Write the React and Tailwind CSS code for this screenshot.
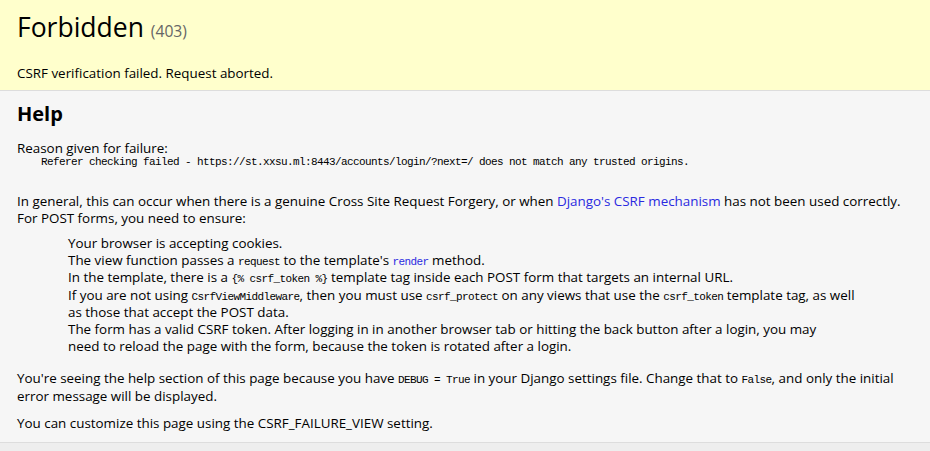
const mono = "font-['Liberation_Mono',monospace] text-[11px] tracking-[-0.6px] leading-none"

function Code({ children, link }) {
  return <code className={`${mono} ${link ? 'text-[#2a2ae0]' : 'text-black'}`}>{children}</code>
}

export default function App() {
  return (
    <div className="min-h-screen bg-[#eee] text-black font-['Open_Sans',sans-serif] text-[13.4px]">
      <div className="bg-[#ffc] border-b border-[#ddd] pl-[17px] pr-5 pt-[10px] pb-[8px]">
        <h1 className="text-[26.5px] leading-[34px] font-normal">
          Forbidden <span className="text-[15.7px] leading-none text-[#666]">(403)</span>
        </h1>
        <p className="mt-[11px] pt-[10px] leading-[17px]">CSRF verification failed. Request aborted.</p>
      </div>

      <div className="bg-[#f6f6f6] border-b border-[#ddd] pl-[17px] pr-5 pt-[11px] pb-[10px]">
        <h2 className="text-[20px] leading-[24px] font-bold">Help</h2>
        <p className="mt-[14px] leading-[17px]">Reason given for failure:</p>
        <pre className={`${mono} leading-[12px] whitespace-pre`}>
          {'    Referer checking failed - https://st.xxsu.ml:8443/accounts/login/?next=/ does not match any trusted origins.'}
        </pre>

        <p className="mt-[25px] leading-[17px]">
          In general, this can occur when there is a genuine Cross Site Request Forgery, or when{' '}
          <a className="text-[#2a2ae0]">Django's CSRF mechanism</a> has not been used correctly.
          For POST forms, you need to ensure:
        </p>

        <ul className="mt-[8px] ml-[51px] mr-[52px] leading-[17.2px] list-none">
          <li>Your browser is accepting cookies.</li>
          <li>
            The view function passes a <Code>request</Code> to the template's <Code link>render</Code> method.
          </li>
          <li>
            In the template, there is a <Code>{'{% csrf_token %}'}</Code> template tag inside each POST form that
            targets an internal URL.
          </li>
          <li>
            If you are not using <Code>CsrfViewMiddleware</Code>, then you must use <Code>csrf_protect</Code> on any
            views that use the <Code>csrf_token</Code> template tag, as well as those that accept the POST data.
          </li>
          <li>
            The form has a valid CSRF token. After logging in in another browser tab or hitting the back button after
            a login, you may
            <br />
            need to reload the page with the form, because the token is rotated after a login.
          </li>
        </ul>

        <p className="mt-[15px] leading-[17.2px]">
          You're seeing the help section of this page because you have <Code>DEBUG = True</Code> in your Django
          settings file. Change that to <Code>False</Code>, and only the initial error message will be displayed.
        </p>
        <p className="mt-[10px] leading-[17px]">You can customize this page using the CSRF_FAILURE_VIEW setting.</p>
      </div>
    </div>
  )
}
